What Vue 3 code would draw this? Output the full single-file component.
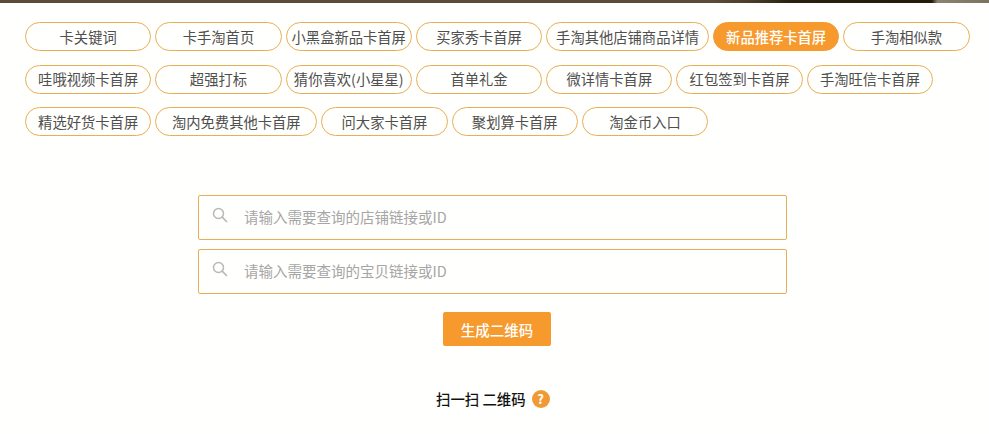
<script setup>
const rows = [
  ['卡关键词', '卡手淘首页', '小黑盒新品卡首屏', '买家秀卡首屏', '手淘其他店铺商品详情', '新品推荐卡首屏', '手淘相似款'],
  ['哇哦视频卡首屏', '超强打标', '猜你喜欢(小星星)', '首单礼金', '微详情卡首屏', '红包签到卡首屏', '手淘旺信卡首屏'],
  ['精选好货卡首屏', '淘内免费其他卡首屏', '问大家卡首屏', '聚划算卡首屏', '淘金币入口']
]
const inputs = ['请输入需要查询的店铺链接或ID', '请输入需要查询的宝贝链接或ID']
</script>

<template>
  <div class="page">
    <div class="strip"></div>
    <div class="chips">
      <div v-for="(row, i) in rows" :key="i" class="row">
        <button
          v-for="t in row"
          :key="t"
          class="chip"
          :class="{ w10: t.length === 10, w9: t.length === 9 && !t.includes('('), active: t === '新品推荐卡首屏' }"
        >{{ t }}</button>
      </div>
    </div>
    <div class="form">
      <label v-for="p in inputs" :key="p" class="field">
        <svg class="search" width="16" height="16" viewBox="0 0 16 16" fill="none">
          <circle cx="6.5" cy="6.5" r="5" stroke="#b9b9b9" stroke-width="1.5" />
          <path d="M10.2 10.2 14.5 14.5" stroke="#b9b9b9" stroke-width="1.7" stroke-linecap="round" />
        </svg>
        <input :placeholder="p" />
      </label>
      <button class="submit">生成二维码</button>
      <div class="scan">
        <span>扫一扫 二维码</span>
        <span class="help">?</span>
      </div>
    </div>
  </div>
</template>

<style>
html, body { margin: 0; background: #fffffd; }
</style>

<style scoped>
.page {
  width: 989px;
  height: 434px;
  overflow: hidden;
  font-family: "Noto Sans CJK SC", "Liberation Sans", sans-serif;
  background: #fffffd;
}
.strip {
  height: 3px;
  background: linear-gradient(90deg, #5a4c38 0%, #5a4c38 72%, #4a3d2a 76%, #2a1f10 80%, #241a0c 94.2%, #8d8272 94.8%, #7c7262 100%);
}
.chips {
  display: flex;
  flex-direction: column;
  gap: 13.6px;
  padding: 19px 0 0 25px;
}
.row {
  display: flex;
  gap: 4px;
}
.chip {
  box-sizing: border-box;
  width: 126.3px;
  height: 29px;
  padding: 0;
  border: 1px solid #e8ae55;
  border-radius: 15px;
  background: #fffffd;
  color: #4f4f4f;
  font: 14.3px/26px "Noto Sans CJK SC", "Liberation Sans", sans-serif;
  white-space: nowrap;
}
.chip.w10 { width: 162.8px; }
.chip.w9 { width: 162px; }
.chip.active {
  background: #f79a2e;
  border-color: #f79a2e;
  color: #fff;
  font-weight: 500;
}
.form {
  display: flex;
  flex-direction: column;
  align-items: flex-start;
  margin-top: 59px;
  padding-left: 198px;
}
.field {
  box-sizing: border-box;
  display: flex;
  align-items: center;
  width: 589px;
  height: 45px;
  margin-bottom: 9px;
  padding-left: 13px;
  border: 1px solid #e8ae55;
  border-radius: 2px;
}
.search { flex: none; margin-top: -5px; }
.field input {
  flex: 1;
  margin-left: 16px;
  margin-top: -2px;
  padding: 0;
  border: 0;
  outline: 0;
  background: transparent;
  font: 14.5px "Noto Sans CJK SC", "Liberation Sans", sans-serif;
  color: #555;
}
.field input::placeholder { color: #a6a6a6; opacity: 1; }
.submit {
  width: 108px;
  height: 34px;
  margin: 9px 0 0 245px;
  padding: 0;
  border: 0;
  border-radius: 2px;
  background: #f79a2e;
  color: #fff;
  font: 500 14.5px "Noto Sans CJK SC", "Liberation Sans", sans-serif;
}
.scan {
  display: flex;
  align-items: center;
  gap: 6px;
  margin: 42px 0 0 238px;
  color: #111;
  font-size: 14.4px;
  font-weight: 500;
}
.help {
  width: 18px;
  height: 18px;
  border-radius: 50%;
  background: #f09a36;
  color: #fff;
  font-size: 13px;
  font-weight: 700;
  line-height: 18px;
  text-align: center;
}
</style>
